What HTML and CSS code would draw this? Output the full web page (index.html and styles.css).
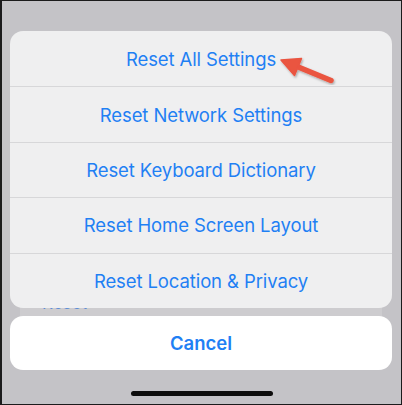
FILE: index.html
```html
<!DOCTYPE html>
<html lang="en">
<head>
  <meta charset="UTF-8" />
  <meta name="viewport" content="width=device-width, initial-scale=1" />
  <title>Reset</title>
  <link rel="stylesheet" href="styles.css">
</head>
<body>

<div class="screen">

  <!-- action sheet -->
  <div class="sheet">
    <div class="sheet-row">Reset All Settings</div>
    <div class="sheet-row">Reset Network Settings</div>
    <div class="sheet-row">Reset Keyboard Dictionary</div>
    <div class="sheet-row">Reset Home Screen Layout</div>
    <div class="sheet-row">Reset Location &amp; Privacy</div>
  </div>

  <!-- list underneath, peeking out -->
  <div class="behind">
    <span>Reset</span>
  </div>

  <div class="cancel">Cancel</div>

  <div class="home-bar"></div>

  <!-- callout arrow -->
  <svg class="callout" width="402" height="405" viewBox="0 0 402 405">
    <defs>
      <filter id="soft" x="-20%" y="-20%" width="140%" height="140%">
        <feDropShadow dx="1" dy="1.5" stdDeviation="1" flood-color="#000" flood-opacity="0.3" />
      </filter>
    </defs>
    <g filter="url(#soft)" fill="#ea5440" stroke="#ea5440">
      <line x1="331" y1="80.5" x2="294" y2="65.3" stroke-width="5.5" stroke-linecap="round" />
      <polygon points="281,60 294.5,75.5 301.5,58.5" stroke-width="1.5" stroke-linejoin="round" />
    </g>
  </svg>

</div>

</body>
</html>
```

FILE: styles.css
```css
body {
  margin: 0;
  font-family: 'Inter', 'Liberation Sans', sans-serif;
}
.screen {
  position: relative;
  width: 402px;
  height: 405px;
  box-sizing: border-box;
  border: 1px solid #1b1b1c;
  border-left-width: 2px;
  background-color: #c4c3c7;
  padding-top: 30px;
  overflow: hidden;
}
.sheet {
  position: relative;
  z-index: 1;
  margin: 0 9px 0 8px;
  background: #efeff0;
  border-radius: 13px;
  overflow: hidden;
}
.sheet-row {
  height: 55.4px;
  box-sizing: border-box;
  display: flex;
  align-items: center;
  justify-content: center;
  font-size: 18.5px;
  color: #1f80f4;
  letter-spacing: -0.1px;
}
.sheet-row + .sheet-row {
  border-top: 1px solid #d7d7d9;
}
.behind {
  height: 18px;
  margin: -10px 19px 0 18px;
  background: #cdcccf;
  padding-left: 22px;
  overflow: hidden;
}
.behind span {
  display: block;
  font-size: 17px;
  line-height: 18px;
  color: #5d8fd8;
  margin-top: -4px;
}
.cancel {
  height: 54px;
  margin: 0 9px 0 8px;
  background: #ffffff;
  border-radius: 13px;
  display: flex;
  align-items: center;
  justify-content: center;
  font-size: 18.5px;
  font-weight: 600;
  color: #1f80f4;
}
.home-bar {
  width: 142px;
  height: 5px;
  margin: 21px auto 0;
  background: #0d0d0d;
  border-radius: 3px;
}
.callout {
  position: absolute;
  z-index: 2;
  left: -2px;
  top: -1px;
  pointer-events: none;
}
```
